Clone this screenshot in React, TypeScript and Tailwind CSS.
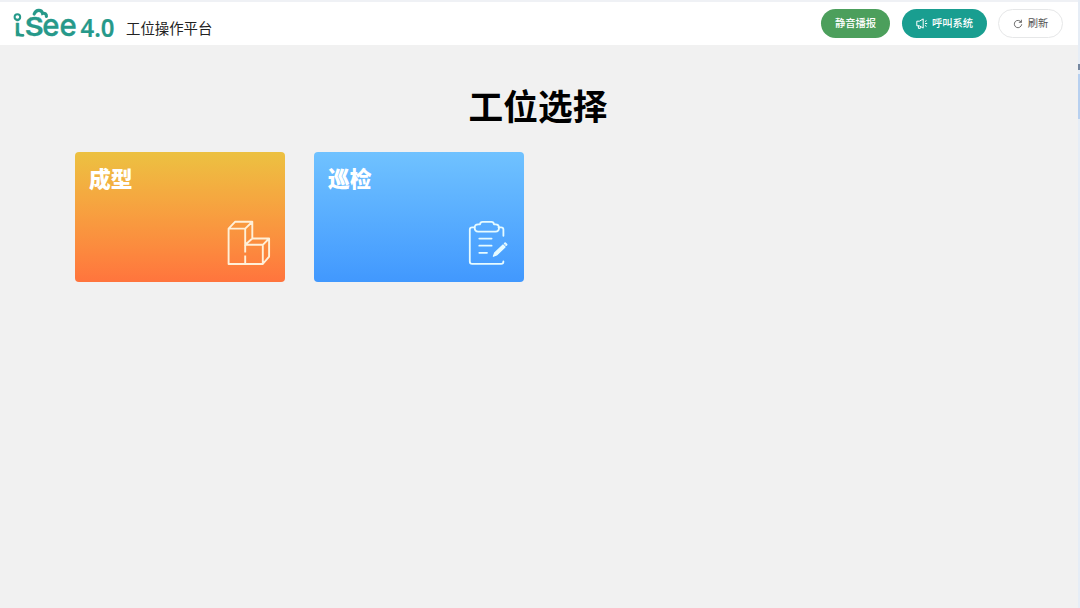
import type { ReactNode } from "react";

function Logo() {
  return (
    <svg width="104" height="38" viewBox="12 6 104 38" role="img" aria-label="iSee 4.0" className="shrink-0 overflow-visible">
      <g fill="#26998a" stroke="#26998a" strokeLinejoin="round" fontFamily="Inter, sans-serif">
        <text x="14.4" y="36.2" fontSize="23" fontWeight="500" strokeWidth="0.6">i</text>
        <text x="24.8" y="36.2" fontSize="25.5" fontWeight="600" strokeWidth="0.3" textLength="19" lengthAdjust="spacingAndGlyphs">S</text>
        <text x="42.3" y="36.3" fontSize="31.5" fontWeight="500" strokeWidth="0.4" textLength="34.5" lengthAdjust="spacingAndGlyphs">ee</text>
        <text x="80.5" y="36.6" fontSize="26" fontWeight="600" strokeWidth="0.2" fontFamily="'Noto Sans', sans-serif" textLength="34" lengthAdjust="spacingAndGlyphs">4.0</text>
      </g>
      <circle cx="17.4" cy="17" r="2.8" fill="#fff" stroke="#26998a" strokeWidth="2" />
      <path d="M17.5 32Q18 35.8 23 35.4" fill="none" stroke="#26998a" strokeWidth="2.8" strokeLinecap="round" />
      <path d="M34.2 14C36 9.2 41.6 9.2 42.6 13.4C44.8 12.8 46.6 14.2 46.4 16.4" fill="none" stroke="#26998a" strokeWidth="3.2" strokeLinecap="round" />
    </svg>
  );
}

function HornIcon() {
  return (
    <svg width="12" height="12" viewBox="0 0 12 12" fill="none" stroke="currentColor" strokeWidth="1" strokeLinejoin="round" strokeLinecap="round">
      <path d="M1.2 3.2H3.4L7.2 0.9V10.1L3.4 7.8H1.2ZM2.4 8V10.4H4.3V8.6M9.3 3.4L10.2 2.8M9.5 5.5H10.8M9.3 7.6L10.2 8.2" />
    </svg>
  );
}

function RefreshIcon() {
  return (
    <svg width="10" height="10" viewBox="0 0 10 10" fill="none" stroke="currentColor" strokeWidth="0.85" strokeLinecap="round" strokeLinejoin="round">
      <path d="M8.2 3.1A3.7 3.7 0 1 0 8.7 5.6M8.4 1.1V3.3H6.2" />
    </svg>
  );
}

function BlocksIcon() {
  return (
    <svg width="44" height="46" viewBox="0 0 44 46" fill="none" stroke="#fff0d8" strokeWidth="1.9" strokeLinejoin="round">
      <path d="M1.6 8.6H18.2V24.8H35.8V44H1.6ZM1.6 8.6L8 1.8H25.3L18.2 8.6M25.3 1.8V18.5L18.2 24.8M25.3 18.5H42.1L35.8 24.8M42.1 18.5V36.6L35.8 44" />
      <path d="M18.2 25V32.5M18.2 35.5V43" />
    </svg>
  );
}

function ClipboardIcon() {
  return (
    <svg width="42" height="46" viewBox="0 0 42 46" fill="none" stroke="#e6fbff" strokeWidth="1.8" strokeLinecap="round" strokeLinejoin="round">
      <path d="M6.5 7.3H4.2Q1.8 7.3 1.8 9.6V41.4Q1.8 43.8 4.2 43.8H33.2Q35.4 43.8 35.4 41.4M30.5 7.3H33Q35.4 7.3 35.4 9.6V15.8" />
      <path d="M12 4.3Q12.3 1.8 14.5 1.8H23.5Q25.7 1.8 26 4.3H27.5Q31 4.3 31 7.8Q31 11.6 27.5 11.6H10.2Q6.7 11.6 6.7 7.8Q6.7 4.3 10.2 4.3Z" />
      <path d="M11.3 18.6H23.6M11.3 25.7H23.6M11.3 32.8H19" />
      <path d="M25.4 36.3L26.6 33L35 25L37 27L28.6 35Z" fill="#e6fbff" strokeWidth="1.2" />
      <path d="M36.7 23.7L37.2 23.2L38.6 24.6L38.1 25.1" />
    </svg>
  );
}

function StationCard({ title, gradient, icon }: { title: string; gradient: string; icon: ReactNode }) {
  return (
    <button className={`flex h-[130px] w-[210px] flex-col justify-between rounded bg-linear-to-b pt-[11px] pb-4 pl-3.5 text-left ${gradient}`}>
      <span className="text-[21.8px] leading-[29px] font-black text-white">{title}</span>
      <span className="mr-3.5 self-end">{icon}</span>
    </button>
  );
}

export default function App() {
  return (
    <div className="flex h-[608px] w-[1080px] overflow-hidden bg-[#f1f1f1] font-['Noto_Sans_CJK_SC',sans-serif] text-black">
      <div className="flex w-[1078px] flex-col">
        <header className="flex h-[45px] shrink-0 items-start border-t-2 border-[#eff1f5] bg-white pr-[15px] pl-3">
          <div className="flex pt-1">
            <Logo />
            <h1 className="ml-2.5 pt-3 text-[14.4px] leading-5 font-normal whitespace-nowrap text-[#222]">工位操作平台</h1>
          </div>
          <div className="ml-auto flex items-center pt-[7px] text-[10.3px] leading-none font-medium text-white">
            <button className="mr-3 h-[29px] w-[69px] rounded-full bg-[#4c9f5c]">静音播报</button>
            <button className="mr-[11px] flex h-[29px] w-[85px] items-center justify-center gap-1 rounded-full bg-[#199e90]">
              <HornIcon />
              <span>呼叫系统</span>
            </button>
            <button className="flex h-[29px] w-[65px] items-center justify-center gap-[5px] rounded-full border border-[#e6e7e8] bg-white font-normal text-[#555]">
              <RefreshIcon />
              <span>刷新</span>
            </button>
          </div>
        </header>
        <main className="flex flex-1 flex-col pt-[35px]">
          <h2 className="pr-0.5 text-center text-[34.7px] leading-[50px] font-bold">工位选择</h2>
          <div className="mt-[22px] ml-[75px] flex gap-[29px]">
            <StationCard title="成型" gradient="from-[#ecc141] to-[#ff743d]" icon={<BlocksIcon />} />
            <StationCard title="巡检" gradient="from-[#70c2ff] to-[#4198fe]" icon={<ClipboardIcon />} />
          </div>
        </main>
      </div>
      <aside className="flex w-0.5 flex-col bg-[#e6edf6]">
        <div className="mt-16 h-1.5 bg-[#74869f]" />
        <div className="mt-1 h-[45px] bg-[#b7d0f0]" />
      </aside>
    </div>
  );
}
